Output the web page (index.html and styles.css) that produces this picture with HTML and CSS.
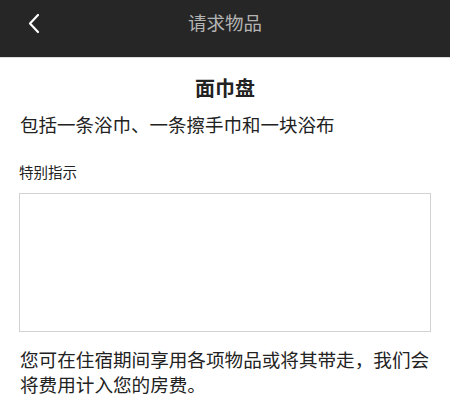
FILE: index.html
```html
<!DOCTYPE html>
<html lang="zh-CN">
<head>
<meta charset="utf-8">
<title>请求物品</title>
<link rel="stylesheet" href="styles.css">
</head>
<body>
<header class="topbar">
  <button class="back" aria-label="返回">
    <svg width="14" height="22" viewBox="0 0 14 22"><path d="M11 3 L3 11.5 L11 20" fill="none" stroke="#fff" stroke-width="2.2" stroke-linecap="round" stroke-linejoin="round"/></svg>
  </button>
  <div class="topbar-title">请求物品</div>
</header>
<main class="content">
  <h1 class="item-title">面巾盘</h1>
  <p class="item-desc">包括一条浴巾、一条擦手巾和一块浴布</p>
  <label class="field-label" for="notes">特别指示</label>
  <textarea id="notes" class="field-box"></textarea>
  <p class="note">您可在住宿期间享用各项物品或将其带走，我们会将费用计入您的房费。</p>
</main>
</body>
</html>
```

FILE: styles.css
```css
html, body {
  margin: 0;
  padding: 0;
  background: #ffffff;
}
body {
  font-family: "Noto Sans CJK SC", "Noto Sans", sans-serif;
  color: #222222;
}
.topbar {
  position: relative;
  height: 57px;
  background: #262626;
  border-bottom: 1px solid #dcdcdc;
  display: flex;
  align-items: center;
  justify-content: center;
}
.back {
  position: absolute;
  left: 27px;
  top: 12px;
  padding: 0;
  border: 0;
  background: none;
  width: 14px;
  height: 22px;
  display: block;
}
.back svg { display: block; }
.topbar-title {
  font-size: 18.5px;
  color: #b4b4b4;
  line-height: 26px;
  margin-top: -14px;
}
.content {
  display: flex;
  flex-direction: column;
  padding: 0 19px 0 19px;
}
.item-title {
  margin: 16px 0 0;
  font-size: 20px;
  line-height: 28px;
  font-weight: 700;
  text-align: center;
  color: #222;
}
.item-desc {
  margin: 8.5px 0 0 1px;
  font-size: 18.5px;
  line-height: 26px;
}
.field-label {
  margin: 25.5px 0 0 0;
  font-size: 14.5px;
  line-height: 20px;
  color: #222;
}
.field-box {
  margin: 10.5px 0 0;
  height: 139px;
  box-sizing: border-box;
  border: 1px solid #d2d2d2;
  resize: none;
  outline: none;
  padding: 0;
  background: #fff;
}
.note {
  margin: 15.5px 0 0 1px;
  font-size: 18.6px;
  line-height: 24.5px;
}
```
